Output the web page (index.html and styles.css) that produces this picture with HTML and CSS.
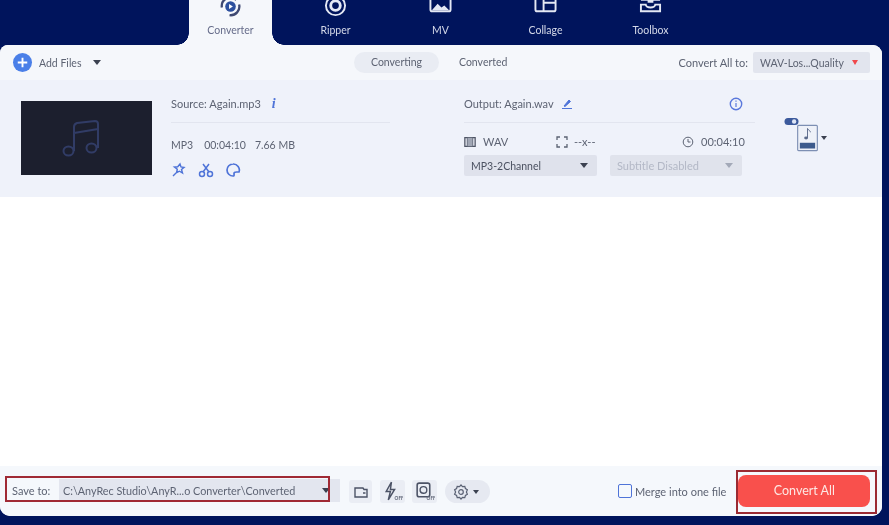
FILE: index.html
```html
<!DOCTYPE html>
<html lang="en">
<head>
<meta charset="utf-8">
<title>Converter</title>
<link rel="stylesheet" href="styles.css">
</head>
<body>
<div class="app">
  <nav class="nav">
    <div class="tab active">
      <svg class="tab-icon" viewBox="0 0 24 24"><path d="M3 13a9 9 0 0 1 15-8M21 10a9 9 0 0 1-10 11" fill="none" stroke="#3e4872" stroke-width="2.400"/><circle cx="12" cy="12" r="5.500" fill="#2c4f9e"/><path d="M10.500 9.500l4 2.500-4 2.500z" fill="#fff"/></svg>
      <span>Converter</span>
    </div>
    <div class="tab">
      <svg class="tab-icon" viewBox="0 0 24 24"><circle cx="12" cy="11" r="10" fill="none" stroke="#e4e8f4" stroke-width="2"/><circle cx="12" cy="11" r="5" fill="none" stroke="#e4e8f4" stroke-width="3"/></svg>
      <span>Ripper</span>
    </div>
    <div class="tab">
      <svg class="tab-icon" viewBox="0 0 24 24"><rect x="1.500" y="-3" width="21" height="20" rx="2" fill="none" stroke="#e4e8f4" stroke-width="2"/><path d="M3 16l6-7 4 4 3-2 5 5z" fill="#e4e8f4"/></svg>
      <span>MV</span>
    </div>
    <div class="tab">
      <svg class="tab-icon" viewBox="0 0 24 24"><rect x="1.500" y="-3" width="21" height="20" rx="2" fill="none" stroke="#e4e8f4" stroke-width="2"/><path d="M10 -3v20M10 8h12" stroke="#e4e8f4" stroke-width="2"/></svg>
      <span>Collage</span>
    </div>
    <div class="tab">
      <svg class="tab-icon" viewBox="0 0 24 24"><path d="M2 -2h20v8h-7v2h-6v-2h-7z" fill="#e4e8f4"/><path d="M2 10h5a5 3 0 0 0 10 0h5v7h-20z" fill="none" stroke="#e4e8f4" stroke-width="2"/></svg>
      <span>Toolbox</span>
    </div>
  </nav>

  <main class="panel">
    <header class="toolbar">
      <div class="add">
        <span class="plus"><svg viewBox="0 0 20 20"><path d="M10 5v10M5 10h10" stroke="#fff" stroke-width="2"/></svg></span>
        <span>Add Files</span>
        <i class="caret dark"></i>
      </div>
      <div class="modes">
        <span class="mode on">Converting</span>
        <span class="mode">Converted</span>
      </div>
      <div class="all">
        <span class="all-label">Convert All to:</span>
        <span class="all-select">WAV-Los...Quality<i class="caret red"></i></span>
      </div>
    </header>

    <section class="row">
      <div class="thumb">
        <svg viewBox="0 0 50 50"><g fill="none" stroke="#313c66" stroke-width="2"><ellipse cx="6.500" cy="38" rx="5" ry="4.500"/><ellipse cx="29.500" cy="35" rx="5" ry="4.500"/><path d="M12 38V14q0-3 3-4l18-2q3 0 3 3v24M12 20l24-4"/></g></svg>
      </div>
      <div class="source">
        <div class="head">Source: Again.mp3<em class="i">i</em></div>
        <div class="meta"><span>MP3</span><span>00:04:10</span><span>7.66 MB</span></div>
        <div class="tools">
          <svg viewBox="0 0 16 16"><path d="M2 14l5-5M9 2l1 3 3 .5-2.500 2 1 3.500-3-1.800-3 1.500.8-3.500L3.500 5l3.200-.2z" fill="none" stroke="#4f74d8" stroke-width="1.400"/></svg>
          <svg viewBox="0 0 16 16"><g fill="none" stroke="#4f74d8" stroke-width="1.500"><circle cx="4" cy="12" r="2.500"/><circle cx="12" cy="12" r="2.500"/><path d="M5 10L11 2M11 10L5 2"/></g></svg>
          <svg viewBox="0 0 16 16"><path d="M8 2a6 6 0 1 0 0 12c1.500 0 1-1.500 1-2.500s1-1.500 2.500-1.500H14a6 6 0 0 0-6-8z" fill="none" stroke="#4f74d8" stroke-width="1.700"/></svg>
        </div>
      </div>
      <div class="output">
        <div class="head spread">
          <span class="name">Output: Again.wav
            <svg class="pen" viewBox="0 0 12 12"><path d="M1 10.500h10M3 8l5-6 1.500 1.500L4 8.500z" fill="#4f74d8" stroke="#4f74d8"/></svg>
          </span>
          <svg class="info" viewBox="0 0 14 14"><circle cx="7" cy="7" r="5.700" fill="none" stroke="#5a78dc" stroke-width="1.400"/><path d="M7 6v4M7 3.500v1.200" stroke="#5a78dc" stroke-width="1.200"/></svg>
        </div>
        <div class="specs">
          <span class="spec wav"><svg viewBox="0 0 14 12"><path d="M1 1h12v10H1zM4 1v10M10 1v10" fill="none" stroke="#4e5565" stroke-width="1.500"/><path d="M4 1h6v10H4z" fill="#a0a6b4"/></svg>WAV</span>
          <span class="spec res"><svg viewBox="0 0 12 12"><path d="M1 4V1h3M8 1h3v3M11 8v3H8M4 11H1V8" fill="none" stroke="#5c6373" stroke-width="1.300"/></svg>--x--</span>
          <span class="spec time"><svg viewBox="0 0 12 12"><circle cx="6" cy="6" r="4.800" fill="none" stroke="#5c6373"/><path d="M6 3v3h2.500" fill="none" stroke="#5c6373"/></svg>00:04:10</span>
        </div>
        <div class="selects">
          <span class="sel">MP3-2Channel<i class="caret dark"></i></span>
          <span class="sel off">Subtitle Disabled<i class="caret pale"></i></span>
        </div>
      </div>
      <div class="format">
        <svg class="toggle" viewBox="0 0 16 8"><rect width="16" height="8" rx="4" fill="#3c5a9c"/><circle cx="11" cy="4" r="2.500" fill="#dfe6f5"/></svg>
        <div class="format-main">
          <svg class="doc" viewBox="0 0 22 28"><rect x=".7" y=".7" width="20.600" height="26.600" rx="1" fill="#eef1f8" stroke="#7d8fb3" stroke-width="1.200"/><path d="M11 4v10" stroke="#5b6a8a"/><ellipse cx="9.500" cy="14" rx="2" ry="1.500" fill="#5b6a8a"/><path d="M11 4c1 2 3 2 3 4" fill="none" stroke="#5b6a8a"/><rect x="3" y="19" width="16" height="6" fill="#3c5a8c"/></svg>
          <i class="caret dark small"></i>
        </div>
      </div>
    </section>

    <div class="blank"></div>

    <footer class="footer">
      <div class="save">
        <span class="save-label">Save to:</span>
        <span class="path">C:\AnyRec Studio\AnyR...o Converter\Converted<i class="caret dark"></i></span>
      </div>
      <span class="btn"><svg viewBox="0 0 16 16"><path d="M2 4h8l1 1.500h3V13H2z" fill="none" stroke="#4c5366" stroke-width="1.400"/><path d="M10 9h2.500" stroke="#4c5366" stroke-width="1.600"/></svg></span>
      <span class="btn wide"><svg viewBox="0 0 20 20"><path d="M9 1L4 10h4l-2 8 6-10H8z" fill="none" stroke="#4c5366" stroke-width="1.400"/><text class="off-tag" x="12" y="18">OFF</text></svg></span>
      <span class="btn wide"><svg viewBox="0 0 20 20"><rect x="3" y="2" width="12" height="13" rx="2" fill="none" stroke="#4c5366" stroke-width="1.500"/><circle cx="9" cy="8.500" r="3.200" fill="none" stroke="#4c5366" stroke-width="1.300"/><text class="off-tag" x="12" y="18">OFF</text></svg></span>
      <span class="gear"><svg viewBox="0 0 16 16"><path d="M8 1l1.500 1.600 2.300-.3.600 2.200 2 1.200-1 2.300 1 2.300-2 1.200-.6 2.200-2.300-.3L8 15l-1.500-1.600-2.300.3-.6-2.200-2-1.200 1-2.300-1-2.300 2-1.200.6-2.200 2.300.3z" fill="none" stroke="#5b6274" stroke-width="1.200"/><circle cx="8" cy="8" r="2.300" fill="none" stroke="#5b6274" stroke-width="1.200"/></svg><i class="caret dark small"></i></span>
      <label class="merge"><i class="check"></i>Merge into one file</label>
      <div class="convert"><span class="convert-btn">Convert All</span></div>
    </footer>
  </main>
</div>
</body>
</html>
```
FILE: styles.css
```css
*, *::before, *::after { box-sizing: border-box; }
html, body { margin: 0; height: 100%; overflow: hidden; background: #00145c; }
.app {
  width: 889px; height: 525px; display: flex; flex-direction: column;
  background: #00145c; font-family: "Lato", "Liberation Sans", sans-serif;
  font-size: 10.5px; color: #5d6373; filter: blur(.6px);
}
.nav { height: 45px; flex: none; display: flex; gap: 22px; padding-left: 189px; }
.tab {
  width: 83px; height: 45px; position: relative; display: flex; flex-direction: column;
  align-items: center; color: #d3d8e8; font-size: 10.5px;
}
.tab span { position: absolute; top: 23px; line-height: 14px; }
.tab-icon { position: absolute; top: -5px; left: 30px; width: 23px; height: 23px; overflow: visible; }
.tab.active { background: #f5f7fb; color: #666c8a; border-radius: 0; }
.tab.active::before, .tab.active::after {
  content: ""; position: absolute; bottom: 0; width: 12px; height: 12px;
}
.tab.active::before { left: -12px; background: radial-gradient(circle at 0 0, #00145c 11.500px, #f5f7fb 12px); }
.tab.active::after { right: -12px; background: radial-gradient(circle at 100% 0, #00145c 11.500px, #f5f7fb 12px); }

.panel {
  width: 882px; height: 471px; flex: none; display: flex; flex-direction: column;
  background: #fff; border-radius: 8px 9px 10px 10px; overflow: hidden;
}
.toolbar {
  height: 35px; flex: none; background: #f5f7fb; display: grid;
  grid-template-columns: 341px 1fr auto; align-items: center; padding: 0 12px 0 13px;
}
.add { display: flex; align-items: center; gap: 7px; }
.plus { width: 19px; height: 19px; border-radius: 50%; background: #4a7fe8; display: flex; }
.plus svg { width: 19px; height: 19px; }
.add .caret { margin-left: 5px; }
.caret { display: inline-block; width: 0; height: 0; border-left: 4px solid transparent; border-right: 4px solid transparent; border-top: 5px solid #5d6373; }
.caret.dark { border-top-color: #3b4150; }
.caret.red { border-top-color: #f0484c; margin-left: 8px; border-left-width: 3.500px; border-right-width: 3.500px; }
.caret.pale { border-top-color: #a3a9b8; }
.caret.small { border-left-width: 3px; border-right-width: 3px; border-top-width: 4px; }
.modes { display: flex; align-items: center; gap: 20px; }
.mode { line-height: 21px; }
.mode.on { width: 85px; text-align: center; border-radius: 11px; background: #e9ecf3; }
.all { display: flex; align-items: center; gap: 5px; }
.all-label { font-size: 11px; }
.all-select { height: 21px; width: 117px; background: #e2e5ee; border-radius: 2px; display: flex; align-items: center; padding-left: 7px; }

.row { height: 117px; flex: none; background: #eff2fa; display: flex; padding: 21px 0 0 21px; font-size: 11px; }
.thumb { width: 131px; height: 74px; background: #1c1f2e; display: flex; align-items: center; justify-content: center; }
.thumb svg { width: 50px; height: 50px; }
.source { width: 219px; margin-left: 19px; }
.head { margin-top: -6px; padding-top: 2px; border-bottom: 1px solid #e2e5ef; line-height: 14px; height: 28px; }
.i { font-family: "Liberation Serif", serif; color: #4f74d8; font-size: 14px; margin-left: 11px; font-weight: 700; }
.meta { display: flex; gap: 11px; margin-top: 15px; line-height: 14px; font-size: 10.5px; }
.meta span + span + span { margin-left: -2px; }
.tools { display: flex; gap: 11px; margin-top: 10px; }
.tools svg { width: 16px; height: 16px; }
.output { width: 291px; margin-left: 74px; }
.spread { display: flex; justify-content: space-between; padding-right: 12px; }
.name { display: flex; align-items: center; gap: 7px; height: 14px; }
.pen { width: 12px; height: 12px; }
.info { width: 14px; height: 14px; }
.specs { display: flex; margin-top: 12px; line-height: 14px; align-items: center; }
.spec { display: flex; align-items: center; gap: 7px; }
.spec svg { width: 12px; height: 12px; }
.wav { width: 92px; }
.res { width: 126px; gap: 6px; }
.selects { display: flex; gap: 13px; margin-top: 6px; }
.sel { width: 133px; height: 21px; background: #dfe2ec; display: flex; align-items: center; justify-content: space-between; padding: 0 9px 0 7px; border-radius: 2px; color: #4b5161; font-size: 10.5px; }
.sel.off { width: 132px; color: #b3b8c6; background: #e0e3ec; font-size: 11px; }
.format { margin-left: 29px; margin-top: 17px; width: 50px; }
.toggle { display: block; width: 15px; height: 7px; }
.format-main { display: flex; align-items: center; gap: 3px; margin: -1px 0 0 13px; }
.doc { width: 21px; height: 28px; }

.blank { flex: 1; background: #fff; }
.footer { height: 50px; flex: none; background: #f5f8fc; display: flex; align-items: center; padding-left: 5px; }
.save { width: 335px; height: 23px; display: flex; align-items: center; position: relative; margin-top: -1px; font-size: 10.800px; }
.save::after { content: ""; position: absolute; left: 0; top: -3px; width: 325px; height: 26px; border: 2px solid #a02a35; }
.save-label { width: 54px; padding-left: 7px; font-size: 11px; }
.path { width: 281px; height: 23px; background: #e3e6ef; display: flex; align-items: center; padding-left: 4px; position: relative; }
.path .caret { position: absolute; left: 263px; top: 9px; }
.btn { width: 23px; height: 23px; margin: 1px 8px 0 9px; background: #eaedf4; border-radius: 3px; display: flex; align-items: center; justify-content: center; }
.btn + .btn { margin-left: 0; }
.btn.wide { width: 25px; margin-right: 7px; }
.btn svg { width: 16px; height: 16px; }
.btn.wide svg { width: 21px; height: 21px; }
.off-tag { font-size: 4.500px; font-weight: 700; fill: #5b6274; }
.gear { width: 45px; height: 23px; margin: 1px 0 0 1px; background: #e6e9f1; border-radius: 12px; display: flex; align-items: center; gap: 4px; padding-left: 8px; }
.gear svg { width: 16px; height: 16px; }
.merge { display: flex; align-items: center; gap: 3px; margin-left: 128px; font-size: 11px; }
.check { width: 14px; height: 14px; border: 1.500px solid #4f74d8; border-radius: 2px; background: #f5f8fc; }
.convert { margin-left: 10px; width: 141px; height: 44px; border: 2px solid #9b2a32; padding: 3px 5px 0 0; margin-top: 2px; }
.convert-btn { display: block; width: 132px; height: 32px; line-height: 32px; text-align: center; background: #f9504c; border-radius: 8px; color: #fde8e4; font-size: 12.500px; }
```
